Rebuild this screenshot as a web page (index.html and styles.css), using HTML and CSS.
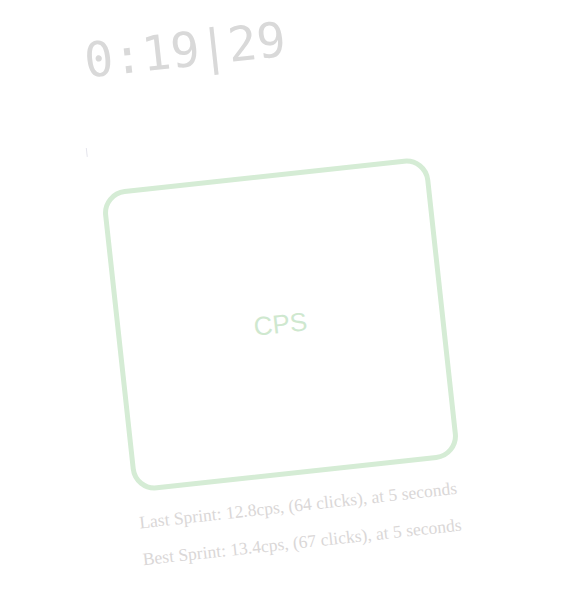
FILE: index.html
```html
<!DOCTYPE html>
<html>
<head>
<meta charset="utf-8">
<link rel="stylesheet" href="styles.css">
</head>
<body>
<div class="stage">
  <div class="timer">0:19|29</div>
  <div class="caret"></div>
  <div class="pad"><span class="pad-label">CPS</span></div>
  <p class="sprint sprint-last">Last Sprint: 12.8cps, (64 clicks), at 5 seconds</p>
  <p class="sprint sprint-best">Best Sprint: 13.4cps, (67 clicks), at 5 seconds</p>
</div>
</body>
</html>
```
FILE: styles.css
```css
html, body {
  margin: 0;
  padding: 0;
  background: #ffffff;
}
body {
  width: 587px;
  height: 601px;
  overflow: hidden;
}
.stage {
  width: 329px;
  margin-left: 116px;
  padding-top: 13px;
  display: flex;
  flex-direction: column;
  transform: rotate(-6.2deg);
  transform-origin: 164.5px 324.5px;
}
.timer {
  font-family: "DejaVu Sans Mono", monospace;
  font-size: 48px;
  line-height: 56px;
  color: #d9d9d9;
  margin-left: -2px;
  white-space: nowrap;
}
.caret {
  width: 1px;
  height: 9px;
  margin-left: -10px;
  margin-top: 59px;
  background: #e4e4ec;
}
.pad {
  box-sizing: border-box;
  width: 329px;
  height: 303px;
  margin-top: 36px;
  border: 5px solid #d5ecd5;
  border-radius: 24px;
  display: flex;
  align-items: center;
  justify-content: center;
}
.pad-label {
  font-family: "Liberation Sans", Arial, sans-serif;
  font-size: 26px;
  color: #cfe8cf;
}
.sprint {
  margin: 0;
  padding-right: 4px;
  font-family: "Liberation Serif", "Times New Roman", serif;
  font-size: 17.6px;
  line-height: 20px;
  color: #dad7d7;
  text-align: center;
  white-space: nowrap;
}
.sprint-last {
  margin-top: 20px;
}
.sprint-best {
  margin-top: 16.7px;
}
```
